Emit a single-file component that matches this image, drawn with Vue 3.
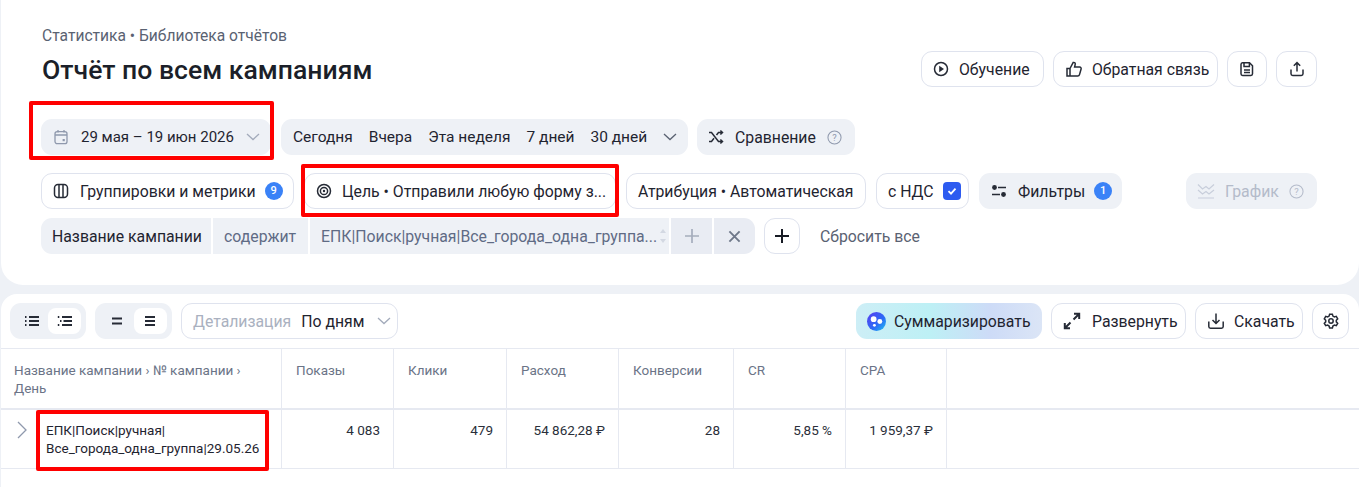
<template>
  <div class="page">
    <section class="top-card">
      <header class="head">
        <div class="titles">
          <p class="crumbs">Статистика • Библиотека отчётов</p>
          <h1>Отчёт по всем кампаниям</h1>
        </div>
        <div class="head-actions">
          <button class="btn w-learn">
            <svg viewBox="0 0 16 16" class="ico"><circle cx="8" cy="8" r="6.5" /><path d="M6.200 4.800 11 8l-4.800 3.200z" class="fill" /></svg>
            Обучение
          </button>
          <button class="btn w-feedback">
            <svg viewBox="0 0 18 18" class="ico big"><path d="M2 8.500h3v7.500H2zM5 8.500 8.200 2.500c1.400-.4 2.300.6 2 1.900L9.600 7h5c1.100 0 1.800 1 1.500 2l-1.600 5.600c-.2.8-.9 1.400-1.800 1.400H5" /></svg>
            Обратная связь
          </button>
          <button class="btn square w-save">
            <svg viewBox="0 0 16 16" class="ico"><path d="M3.500 1.800h7l3 3v8a1.600 1.600 0 0 1-1.600 1.600H3.600A1.600 1.600 0 0 1 2 12.800V3.400a1.600 1.600 0 0 1 1.500-1.600z" /><path d="M5 2v3.400h5.400V2M5 9h6M5 11.500h6" /></svg>
          </button>
          <button class="btn square w-share">
            <svg viewBox="0 0 16 16" class="ico"><path d="M8 10.500V1.800M4.800 4.800 8 1.600l3.200 3.200M2 8.500v4.200c0 1 .7 1.700 1.700 1.700h8.600c1 0 1.700-.7 1.700-1.700V8.500" /></svg>
          </button>
        </div>
      </header>

      <div class="row row-dates">
        <button class="chip w-date">
          <svg viewBox="0 0 16 16" class="ico muted"><rect x="2" y="2.600" width="12" height="12" rx="2.200" /><path d="M2 6h12M5 1v2.600M11 1v2.600" /><rect x="9.600" y="10" width="2.200" height="2.200" class="fill" /></svg>
          <span>29 мая – 19 июн 2026</span>
          <svg viewBox="0 0 14 8" class="chev"><path d="m1 1 6 5.600L13 1" /></svg>
        </button>
        <div class="chip w-periods">
          <span>Сегодня</span><span>Вчера</span><span>Эта неделя</span><span>7 дней</span><span>30 дней</span>
          <svg viewBox="0 0 14 8" class="chev dark"><path d="m1 1 6 5.600L13 1" /></svg>
        </div>
        <button class="chip w-compare">
          <svg viewBox="0 0 16 16" class="ico"><path d="M1 3.500h2.500l7 9H14M1 12.500h2.500L6 9.300M8.500 6l2-2.500H14M12.400 1.500 14.500 3.500l-2.100 2M12.400 10.500l2.100 2-2.100 2" /></svg>
          <span>Сравнение</span>
          <svg viewBox="0 0 16 16" class="help"><circle cx="8" cy="8" r="7" /><text x="8" y="11.600" text-anchor="middle">?</text></svg>
        </button>
      </div>

      <div class="row row-settings">
        <button class="btn w-groups">
          <svg viewBox="0 0 16 16" class="ico"><rect x="1.500" y="1.500" width="13" height="13" rx="3.500" /><path d="M6 1.500v13M10 1.500v13" /></svg>
          <span>Группировки и метрики</span>
          <i class="badge">9</i>
        </button>
        <button class="btn w-goal">
          <svg viewBox="0 0 16 16" class="ico"><circle cx="8" cy="8" r="6.500" /><circle cx="8" cy="8" r="3.600" /><circle cx="8" cy="8" r="1.200" class="fill" /></svg>
          <span>Цель • Отправили любую форму з...</span>
        </button>
        <button class="btn w-attr"><span>Атрибуция • Автоматическая</span></button>
        <button class="btn w-vat">
          <span>с НДС</span>
          <i class="check"><svg viewBox="0 0 12 12"><path d="m2.500 6.200 2.500 2.500 4.500-5" /></svg></i>
        </button>
        <button class="chip w-filters">
          <svg viewBox="0 0 16 16" class="ico"><path d="M7 4.500h8M1 11.500h8" /><circle cx="3.500" cy="4.500" r="2.400" class="fill" /><circle cx="12.500" cy="11.500" r="2.400" class="fill" /></svg>
          <span>Фильтры</span>
          <i class="badge">1</i>
        </button>
        <button class="chip w-chart">
          <svg viewBox="0 0 18 16" class="ico wide"><path d="M1 1.500 5.500 6l3.500-2.500L12 6l5-4.500M1 7l4.500 4 3.500-2.500 3 2.500 5-4M1 15h16" /></svg>
          <span>График</span>
          <svg viewBox="0 0 16 16" class="help"><circle cx="8" cy="8" r="7" /><text x="8" y="11.600" text-anchor="middle">?</text></svg>
        </button>
      </div>

      <div class="row row-filter">
        <div class="seg seg-name">Название кампании</div>
        <div class="seg seg-op">содержит</div>
        <div class="seg seg-value">
          <span>ЕПК|Поиск|ручная|Все_города_одна_группа...</span>
          <i class="spin"><b class="up"></b><b class="down"></b></i>
        </div>
        <div class="seg seg-plus">
          <svg viewBox="0 0 14 14"><path d="M7 0v14M0 7h14" /></svg>
        </div>
        <div class="seg seg-close">
          <svg viewBox="0 0 14 14"><path d="m1.500 1.500 11 11M12.500 1.500l-11 11" /></svg>
        </div>
        <button class="btn square w-add">
          <svg viewBox="0 0 16 16" class="ico plus-big"><path d="M8 1v14M1 8h14" /></svg>
        </button>
        <span class="reset">Сбросить все</span>
      </div>
    </section>

    <section class="table-card">
      <div class="toolbar">
        <div class="toggle w-toggle1">
          <span class="opt">
            <svg viewBox="0 0 16 12" class="ico tiny"><path d="M5 2h10M5 6h10M5 10h10" /><path d="M1 2h1.500M1 6h1.500M1 10h1.500" /></svg>
          </span>
          <span class="opt on">
            <svg viewBox="0 0 16 12" class="ico tiny"><path d="M5 2h10M6.500 6h8.500M5 10h10" /><path d="M.8 2h1.500M3 6h1.500M.8 10h1.500" /></svg>
          </span>
        </div>
        <div class="toggle w-toggle2">
          <span class="opt">
            <svg viewBox="0 0 12 12" class="ico tiny"><path d="M1 3.500h10M1 8.500h10" /></svg>
          </span>
          <span class="opt on">
            <svg viewBox="0 0 12 12" class="ico tiny"><path d="M1 2h10M1 6h10M1 10h10" /></svg>
          </span>
        </div>
        <button class="btn w-detail">
          <span class="dim">Детализация</span>
          <span>По дням</span>
          <svg viewBox="0 0 14 8" class="chev"><path d="m1 1 6 5.600L13 1" /></svg>
        </button>
        <div class="spacer"></div>
        <button class="chip w-summary">
          <svg viewBox="0 0 20 20" class="logo">
            <defs>
              <linearGradient id="orb" x1="0" y1="0" x2="1" y2="1">
                <stop offset="0" stop-color="#5b3cf0" />
                <stop offset="0.6" stop-color="#2b6cf6" />
                <stop offset="1" stop-color="#22c8f0" />
              </linearGradient>
            </defs>
            <circle cx="10" cy="10" r="10" fill="url(#orb)" />
            <circle cx="7" cy="7.500" r="3" fill="#fff" />
            <circle cx="13.500" cy="10" r="2.600" fill="#fff" />
            <circle cx="7.800" cy="14" r="1.500" fill="#fff" />
          </svg>
          <span>Суммаризировать</span>
        </button>
        <button class="btn w-expand">
          <svg viewBox="0 0 18 18" class="ico big strong"><path d="M10.500 7.500 16 2M11 1.800h5.200V7M7.500 10.500 2 16M7 16.200H1.800V11" /></svg>
          <span>Развернуть</span>
        </button>
        <button class="btn w-download">
          <svg viewBox="0 0 18 18" class="ico big"><path d="M9 1.500v10M5.500 8 9 11.500 12.500 8M1.800 9.500v5c0 1 .7 1.700 1.700 1.700h11c1 0 1.700-.7 1.700-1.700v-5" /></svg>
          <span>Скачать</span>
        </button>
        <button class="btn square w-gear">
          <svg viewBox="0 0 16 16" class="ico"><path d="M6.600 1.200h2.800l.5 1.900 1.500.9 1.900-.6 1.400 2.400-1.400 1.400v1.700l1.400 1.400-1.400 2.400-1.900-.6-1.500.9-.5 1.900H6.600l-.5-1.900-1.500-.9-1.900.6-1.400-2.400 1.400-1.400V7.200L1.300 5.800l1.400-2.400 1.900.6 1.500-.9z" /><circle cx="8" cy="8" r="2.200" /></svg>
        </button>
      </div>

      <div class="grid head-row">
        <div class="cell first">Название кампании › № кампании › День</div>
        <div v-for="col in columns" :key="col.key" class="cell">{{ col.title }}</div>
        <div class="cell last"></div>
      </div>
      <div class="grid body-row">
        <div class="cell first">
          <svg viewBox="0 0 10 18" class="expander"><path d="m1 1 8 8-8 8" /></svg>
          <span class="camp">ЕПК|Поиск|ручная|<br />Все_города_одна_группа|29.05.26</span>
        </div>
        <div v-for="col in columns" :key="col.key" class="cell num">{{ col.value }}</div>
        <div class="cell last"></div>
      </div>
    </section>

    <div class="mark mark-date"></div>
    <div class="mark mark-goal"></div>
    <div class="mark mark-camp"></div>
  </div>
</template>

<script setup>
const columns = [
  { key: "shows", title: "Показы", value: "4 083" },
  { key: "clicks", title: "Клики", value: "479" },
  { key: "cost", title: "Расход", value: "54 862,28 ₽" },
  { key: "conv", title: "Конверсии", value: "28" },
  { key: "cr", title: "CR", value: "5,85 %" },
  { key: "cpa", title: "CPA", value: "1 959,37 ₽" },
];
</script>

<style>
html,
body {
  margin: 0;
  background: #eef1f6;
}
</style>

<style scoped>
.page {
  position: relative;
  width: 1359px;
  height: 487px;
  overflow: hidden;
  background: #eef1f6;
  font-family: Roboto, "Liberation Sans", sans-serif;
  font-size: 15.800px;
  color: #1f2430;
}

.top-card {
  box-sizing: border-box;
  height: 285px;
  margin-left: 1px;
  padding: 27px 42px 0 40px;
  background: #fff;
  border-radius: 0 0 22px 22px;
}

.head {
  display: flex;
  justify-content: space-between;
  height: 92px;
}

.titles {
  padding-left: 1px;
}

.crumbs {
  margin: 0;
  height: 19px;
  line-height: 19px;
  font-size: 15.600px;
  color: #5a6272;
}

h1 {
  margin: 9px 0 0;
  font-size: 26.600px;
  line-height: 30px;
  font-weight: 500;
  color: #1b1f29;
}

.head-actions {
  display: flex;
  gap: 9px;
  margin-top: 24px;
}

.row {
  display: flex;
  align-items: center;
  height: 36px;
  gap: 10px;
}

.row-settings {
  margin-top: 18px;
}

.row-filter {
  margin-top: 9px;
  gap: 2px;
}

button {
  font: inherit;
  color: inherit;
  margin: 0;
}

.btn,
.chip {
  box-sizing: border-box;
  display: flex;
  align-items: center;
  height: 36px;
  padding: 0 11px;
  gap: 10px;
  border-radius: 11px;
  white-space: nowrap;
}

.btn {
  background: #fff;
  border: 1px solid #dfe3ee;
}

.chip {
  background: #eef1f6;
  border: 0;
}

.square {
  justify-content: center;
  padding: 0;
}

.ico {
  flex: none;
  width: 16px;
  height: 16px;
  fill: none;
  stroke: #262b36;
  stroke-width: 1.500;
}

.ico.big {
  width: 18px;
  height: 18px;
}

.ico.strong {
  stroke-width: 2;
}

.ico.wide {
  width: 18px;
  height: 16px;
  stroke: #c8cedb;
  stroke-width: 1.200;
}

.ico.tiny {
  width: 16px;
  height: 12px;
  stroke-width: 1.800;
}

.ico.muted {
  stroke: #8f99ad;
  stroke-width: 1.300;
}

.ico .fill,
.ico.muted .fill {
  fill: currentColor;
  stroke: none;
}

.ico .fill {
  color: #262b36;
}

.ico.muted .fill {
  color: #8f99ad;
}

.plus-big {
  stroke: #171b24;
  stroke-width: 2;
}

.chev {
  flex: none;
  width: 14px;
  height: 8px;
  fill: none;
  stroke: #a3abbb;
  stroke-width: 1.300;
}

.chev.dark {
  stroke: #5a6272;
}

.help {
  flex: none;
  width: 15px;
  height: 15px;
  fill: none;
  stroke: #8f99ad;
  stroke-width: 1.100;
}

.help text {
  font-size: 10px;
  fill: #8f99ad;
  stroke: none;
}

.badge {
  flex: none;
  width: 18px;
  height: 18px;
  margin-left: -2px;
  border-radius: 50%;
  background: #3a82f7;
  color: #fff;
  font-style: normal;
  font-size: 11px;
  font-weight: 500;
  line-height: 18px;
  text-align: center;
}

.check {
  flex: none;
  display: flex;
  align-items: center;
  justify-content: center;
  width: 18px;
  height: 18px;
  border-radius: 4px;
  background: #2d5bf0;
}

.check svg {
  width: 12px;
  height: 12px;
  fill: none;
  stroke: #fff;
  stroke-width: 1.800;
}

.w-learn { width: 123px; }
.w-feedback { width: 165px; gap: 9px; }
.w-save { width: 40px; }
.w-share { width: 41px; }

.w-date {
  width: 230px;
  gap: 12px;
  padding: 0 12px;
  font-size: 15px;
}
.w-periods {
  width: 407px;
  gap: 16px;
  padding: 0 12px;
  font-size: 15.500px;
}
.w-periods .chev { margin-left: auto; }
.w-compare { width: 158px; gap: 11px; margin-left: -1px; }

.w-groups { width: 253px; gap: 11px; padding: 0 11px; }
.w-goal { width: 312px; }
.w-attr { width: 240px; }
.w-vat { width: 93px; gap: 9px; }
.w-filters { width: 143px; gap: 11px; padding: 0 12px; }
.w-chart {
  width: 131px;
  margin-left: 54px;
  color: #b4bbca;
}
.w-chart .help {
  stroke: #b4bbca;
}
.w-chart .help text {
  fill: #b4bbca;
}

.seg {
  box-sizing: border-box;
  display: flex;
  align-items: center;
  height: 36px;
  padding: 0 11px;
  background: #eef1f6;
  white-space: nowrap;
}

.seg-name {
  width: 170px;
  border-radius: 11px 0 0 11px;
}

.seg-op {
  width: 95px;
  color: #5f6b85;
}

.seg-value {
  width: 359px;
  justify-content: space-between;
  color: #5f6b85;
  padding-right: 3px;
}

.spin {
  display: flex;
  flex-direction: column;
  gap: 6px;
}

.spin b {
  width: 0;
  height: 0;
  border-left: 3px solid transparent;
  border-right: 3px solid transparent;
}

.spin .up {
  border-bottom: 4px solid #d3d8e2;
}

.spin .down {
  border-top: 4px solid #d3d8e2;
}

.seg-plus,
.seg-close {
  justify-content: center;
  padding: 0;
}

.seg-plus {
  width: 41px;
  background: #e9ecf3;
}

.seg-close {
  width: 41px;
  background: #e9ecf3;
  border-radius: 0 11px 11px 0;
}

.seg svg {
  width: 14px;
  height: 14px;
  fill: none;
  stroke: #a5adbc;
  stroke-width: 1.700;
}

.seg-close svg {
  stroke: #6e7789;
  width: 13px;
  height: 13px;
  stroke-width: 2;
}

.w-add {
  width: 36px;
  margin-left: 7px;
}

.reset {
  margin-left: 18px;
  color: #5a6272;
}

.table-card {
  box-sizing: border-box;
  height: 200px;
  margin: 9px 0 0 1px;
  background: #fff;
  border-radius: 16px 16px 0 0;
}

.toolbar {
  display: flex;
  align-items: center;
  gap: 9px;
  height: 36px;
  padding: 9px 9px 9px 9px;
  padding-right: 10px;
}

.spacer {
  flex: 1;
}

.toggle {
  box-sizing: border-box;
  display: flex;
  height: 36px;
  padding: 5px;
  border-radius: 11px;
  background: #eef1f6;
}

.w-toggle1 { width: 76px; }
.w-toggle2 { width: 77px; }

.opt {
  display: flex;
  align-items: center;
  justify-content: center;
  flex: 1;
  border-radius: 8px;
}

.opt.on {
  background: #fff;
}

.w-detail {
  width: 217px;
  gap: 10px;
}

.w-detail .chev {
  margin-left: 2px;
}

.dim {
  color: #aab1c0;
}

.w-summary {
  width: 186px;
  padding: 0 11px;
  gap: 8px;
  background: linear-gradient(90deg, #cdeef6 0%, #bdf0f5 40%, #cddbf7 72%, #dbe5f6 100%);
}

.logo {
  flex: none;
  width: 19px;
  height: 19px;
}

.w-expand { width: 135px; gap: 11px; }
.w-download { width: 108px; gap: 9px; }
.w-gear { width: 37px; }

.grid {
  display: grid;
  grid-template-columns: 281px 112px 113px 112px 115px 112px 101px 1fr;
  font-size: 13.500px;
}

.head-row {
  height: 62px;
  border-top: 1px solid #e6e9f1;
  border-bottom: 2px solid #e6e9f1;
  box-sizing: border-box;
  color: #6b7487;
}

.body-row {
  height: 59px;
  border-bottom: 1px solid #e6e9f1;
  box-sizing: border-box;
  color: #2a2f3a;
}

.cell {
  box-sizing: border-box;
  padding: 12px 14px;
  line-height: 18px;
  border-right: 1px solid #e6e9f1;
}

.cell.last {
  border-right: 0;
}

.head-row .first {
  padding-left: 13px;
}

.body-row .first {
  display: flex;
  align-items: flex-start;
  gap: 16px;
  padding: 11px 0 0 16px;
  color: #1f2430;
}

.expander {
  flex: none;
  width: 10px;
  height: 18px;
  fill: none;
  stroke: #8f99ad;
  stroke-width: 1.300;
}

.camp {
  font-size: 13.500px;
  white-space: nowrap;
  margin-left: 3px;
}

.num {
  padding: 11px 13px 0 0;
  text-align: right;
}

.mark {
  position: absolute;
  box-sizing: border-box;
  border: 4px solid #f00;
  border-radius: 2px;
  pointer-events: none;
}

.mark-date {
  left: 29px;
  top: 101px;
  width: 245px;
  height: 59px;
}

.mark-goal {
  left: 301px;
  top: 164px;
  width: 318px;
  height: 53px;
}

.mark-camp {
  left: 36px;
  top: 410px;
  width: 233px;
  height: 61px;
}
</style>
